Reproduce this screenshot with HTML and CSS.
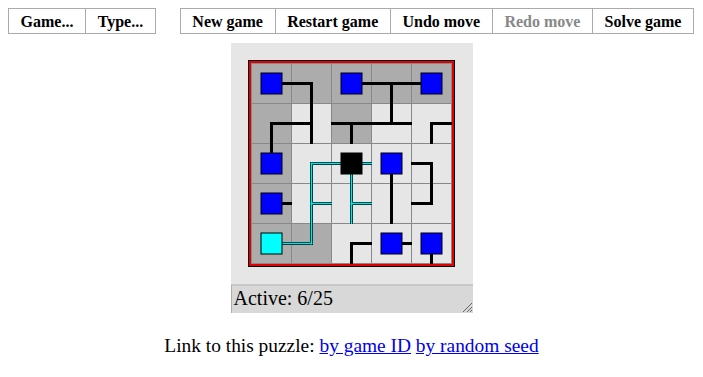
FILE: index.html
```html
<!DOCTYPE html>

<html>
	<head>
		<meta charset="utf-8"/>
		<title>Net</title>
		<link rel="stylesheet" href="styles.css">
	</head>
	<body>
		<div class="menubar">
			<ul class="menu">
				<li>Game...</li>
				<li>Type...</li>
			</ul>
			<ul class="menu">
				<li>New game</li>
				<li>Restart game</li>
				<li>Undo move</li>
				<li class="disabled">Redo move</li>
				<li>Solve game</li>
			</ul>
		</div>
		<div class="puzzle">
			<svg id="board" class="board" width="242" height="241" viewBox="1 0 242 241"></svg>
			<div class="statusbar">
				<span class="status">Active: 6/25</span>
				<svg class="grip" width="12" height="12" viewBox="0 0 12 12">
					<line x1="3" y1="12" x2="12" y2="3" stroke="#666" stroke-width="1"/>
					<line x1="7" y1="12" x2="12" y2="7" stroke="#666" stroke-width="1"/>
					<line x1="10" y1="12" x2="12" y2="10" stroke="#666" stroke-width="1"/>
				</svg>
			</div>
		</div>
		<p class="links">Link to this puzzle: <a href="#">by game ID</a> <a href="#">by random seed</a></p>
	<script>
		// 5x5 grid: directions R U L D, * = endpoint box, + = powered, S = source
		var tiles = [
			"R*", "LD", "R*", "LRD", "L*",
			"RD", "LUD", "LRD", "LUR", "RD",
			"U*", "RD+", "LRD+S", "D*", "LD",
			"R*", "URD+", "URD+", "UD", "UL",
			"R*+", "LU+", "RD", "R*", "D*"
		];
		var locked = [1,1,1,1,1, 1,0,1,0,0, 1,0,0,0,0, 1,0,0,0,0, 1,1,0,0,0];
		var svgNS = "http://www.w3.org/2000/svg";
		var board = document.getElementById("board");

		function add(name, attrs){
			var el = document.createElementNS(svgNS, name);
			for(var k in attrs){
				el.setAttribute(k, attrs[k]);
			}
			board.appendChild(el);
			return el;
		}

		function segments(t, c, r, ext){
			var cx = 41.5 + 40*c, cy = 40.5 + 40*r, out = [];
			if(t.indexOf("L") >= 0) out.push([21+40*c, cy, cx+ext, cy]);
			if(t.indexOf("R") >= 0) out.push([cx-ext, cy, 62+40*c, cy]);
			if(t.indexOf("U") >= 0) out.push([cx, 20+40*r, cx, cy+ext]);
			if(t.indexOf("D") >= 0) out.push([cx, cy-ext, cx, 61+40*r]);
			return out;
		}

		// frame (barriers round the edge)
		add("rect", {x:18, y:17, width:207, height:207, fill:"#000"});
		add("rect", {x:19, y:18, width:205, height:205, fill:"#e00000"});

		var i, c, r;
		for(i = 0; i < 25; i++){
			c = i % 5; r = Math.floor(i / 5);
			add("rect", {x:21+40*c, y:20+40*r, width:40, height:40, fill: locked[i] ? "#acacac" : "#e6e6e6"});
		}
		for(i = 0; i <= 5; i++){
			add("line", {x1:21.5+40*i, y1:20, x2:21.5+40*i, y2:221, stroke:"#888", "stroke-width":1});
			add("line", {x1:21, y1:20.5+40*i, x2:222, y2:20.5+40*i, stroke:"#888", "stroke-width":1});
		}

		tiles.forEach(function(t, i){
			var c = i % 5, r = Math.floor(i / 5);
			segments(t, c, r, 1.5).forEach(function(s){
				add("line", {x1:s[0], y1:s[1], x2:s[2], y2:s[3], stroke:"#000", "stroke-width":3});
			});
			if(t.indexOf("+") >= 0){
				segments(t, c, r, 0.8).forEach(function(s){
					add("line", {x1:s[0], y1:s[1], x2:s[2], y2:s[3], stroke:"#00e8e8", "stroke-width":1.6});
				});
			}
		});

		tiles.forEach(function(t, i){
			var c = i % 5, r = Math.floor(i / 5);
			var cx = 41.5 + 40*c, cy = 40.5 + 40*r, fill = null;
			if(t.indexOf("S") >= 0) fill = "#000";
			else if(t.indexOf("*") >= 0) fill = t.indexOf("+") >= 0 ? "#00ffff" : "#0000ff";
			if(fill){
				add("rect", {x:cx-10.5, y:cy-10.5, width:21, height:21, fill:fill, stroke:"#000", "stroke-width":1});
			}
		});
	</script>
	</body>
</html>
```

FILE: styles.css
```css
/*main layout*/
body{
	margin: 8px;
	font-family: "Liberation Serif", "Times New Roman", serif;
	color: #000;
	background: #fff;
}

/*menu bar*/
.menubar{
	display: flex;
	gap: 24px;
}
.menu{
	display: flex;
	flex-shrink: 0;
	list-style: none;
	margin: 0;
	padding: 0;
	border: solid 1px #aaaaaa;
}
.menu li{
	padding: 1px 11.6px 0 11.6px;
	font-weight: bold;
	font-size: 16px;
	line-height: 23px;
	white-space: nowrap;
	border-left: solid 1px #aaaaaa;
	cursor: pointer;
}
.menu li:first-child{
	border-left: none;
}
.menu li.disabled{
	color: #888888;
}

/*puzzle canvas and status bar*/
.puzzle{
	width: 242px;
	margin: 9px auto 0 auto;
	background-color: #e6e6e6;
}
.board{
	display: block;
}
.statusbar{
	display: flex;
	align-items: flex-end;
	height: 27px;
	border-top: solid 2px #c8c8c8;
	border-left: solid 1px #b0b0b0;
	background-color: #d8d8d8;
}
.status{
	flex: 1;
	padding: 0 0 2px 2px;
	font-size: 20px;
	line-height: 25px;
}
.grip{
	display: block;
	margin: 0 1px 1px 0;
}

/*links under the puzzle*/
.links{
	margin: 22px 0 0 0;
	text-align: center;
	font-size: 19.4px;
}
.links a{
	color: #0000ee;
}
```
